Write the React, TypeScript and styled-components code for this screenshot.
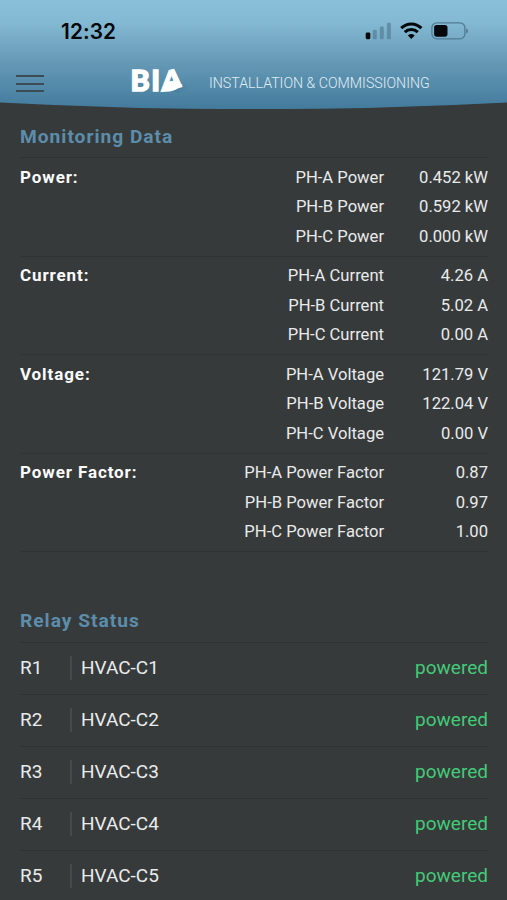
import React from "react";
import styled, { createGlobalStyle } from "styled-components";

const GlobalStyle = createGlobalStyle`
  * { box-sizing: border-box; }
  body {
    margin: 0;
    background: #373a3b;
    font-family: Roboto, "Liberation Sans", sans-serif;
  }
`;

const Screen = styled.div`
  width: 507px;
  height: 900px;
  overflow: hidden;
  background: #373a3b;
  color: #e9ebeb;
`;

const Header = styled.header`
  height: 109px;
  background: linear-gradient(#8bc0da 0, #84b9d3 22px, #6599b6 62px, #437b9d 109px);
  clip-path: path("M0 0H507V102.5Q253.5 116 0 102.5Z");
`;

const StatusBar = styled.div`
  height: 62px;
  padding: 0 38px 0 61px;
  display: flex;
  align-items: center;
  justify-content: space-between;
`;

const Clock = styled.span`
  padding-top: 1px;
  font: 600 20.8px/24px Inter, sans-serif;
  letter-spacing: 0.1px;
  color: #05080a;
`;

const NavBar = styled.div`
  height: 47px;
  padding-left: 16px;
  display: flex;
`;

const MenuButton = styled.button`
  width: 28px;
  height: 17px;
  margin-top: 13px;
  padding: 0;
  border: 0;
  background: none;
  display: flex;
  flex-direction: column;
  justify-content: space-between;
`;

const MenuLine = styled.span`
  height: 2px;
  width: 28px;
  background: #3b4c56;
`;

const LogoMark = styled.svg`
  margin-left: 84px;
  overflow: visible;
`;

const AppTitle = styled.h1`
  margin: 12px 0 0 13px;
  font-size: 14.2px;
  font-weight: 300;
  line-height: 18px;
  white-space: nowrap;
  color: #e0edf4;
`;

const Section = styled.section<{ $offset: number }>`
  padding: ${(p) => p.$offset}px 19px 0 20px;
`;

const SectionTitle = styled.h2<{ $space: number }>`
  margin: 0;
  padding-bottom: ${(p) => p.$space}px;
  border-bottom: 1px solid #2f3233;
  font-size: 19.2px;
  font-weight: 700;
  line-height: 24px;
  letter-spacing: 0.98px;
  color: #5c8dab;
`;

const Group = styled.div`
  height: 98.5px;
  padding-top: 4.5px;
  display: flex;
  border-bottom: 1px solid #313435;
`;

const GroupName = styled.h3`
  margin: 0;
  flex: 1;
  font-size: 17px;
  font-weight: 700;
  line-height: 29.6px;
  letter-spacing: 0.9px;
  color: #fbfbfb;
`;

const Readings = styled.dl`
  margin: 0;
  display: grid;
  grid-template-columns: auto 104px;
  grid-auto-rows: 29.6px;
  text-align: right;
  font-size: 16.6px;
  line-height: 29.6px;
  white-space: nowrap;
`;

const ReadingName = styled.dt``;

const ReadingValue = styled.dd`
  margin: 0;
`;

const RelayRow = styled.div`
  height: 52px;
  padding-bottom: 2px;
  display: flex;
  align-items: center;
  border-bottom: 1px solid #2f3233;
  font-size: 19px;
  line-height: 24px;
`;

const RelayId = styled.span`
  width: 52px;
  border-right: 2px solid #464a4b;
`;

const RelayName = styled.span`
  flex: 1;
  padding-left: 9px;
`;

const RelayState = styled.span`
  color: #42ca77;
`;

const groups = [
  { name: "Power", values: ["0.452 kW", "0.592 kW", "0.000 kW"] },
  { name: "Current", values: ["4.26 A", "5.02 A", "0.00 A"] },
  { name: "Voltage", values: ["121.79 V", "122.04 V", "0.00 V"] },
  { name: "Power Factor", values: ["0.87", "0.97", "1.00"] },
];

const phases = ["A", "B", "C"];
const relays = [1, 2, 3, 4, 5];

function StatusIcons() {
  return (
    <svg width="105" height="20" viewBox="1.3 0 105 20">
      <rect x="3" y="11.4" width="4.6" height="6.8" rx="1.4" fill="#05080a" />
      <g fill="#527c91" opacity="0.65">
        <rect x="10.1" y="8.8" width="4" height="9.4" rx="1.3" />
        <rect x="17.1" y="5.5" width="4" height="12.7" rx="1.3" />
        <rect x="24.2" y="1.8" width="4" height="16.4" rx="1.3" />
      </g>
      <g fill="none" stroke="#05080a" strokeWidth="3.1">
        <path d="M38.5 7.2C44.1 1.5 53.1 1.5 58.7 7.2" />
        <path d="M42.1 11.2C45.8 7.6 51.4 7.6 55.1 11.2" />
      </g>
      <path d="M45.2 14.5Q48.6 11.7 52 14.5L48.6 18.1Z" fill="#05080a" />
      <rect x="69.2" y="1.8" width="33" height="16" rx="5" fill="none" stroke="#527b91" strokeWidth="1.3" />
      <rect x="71.4" y="3.9" width="13.4" height="11.8" rx="2.6" fill="#05080a" />
      <path d="M103.4 7.6Q105.4 8.3 105.4 10T103.4 12.4Z" fill="#527b91" />
    </svg>
  );
}

function Logo() {
  return (
    <LogoMark width="68" height="38" viewBox="0 0 68 38">
      <defs>
        <linearGradient id="logoShade" x1="0" y1="0" x2="1" y2="0.4">
          <stop offset="0" stopColor="#356e92" stopOpacity="0.75" />
          <stop offset="1" stopColor="#356e92" stopOpacity="0" />
        </linearGradient>
      </defs>
      <path d="M53 21L62 26L54 31L39 29Z" fill="url(#logoShade)" />
      <g fill="#fff" stroke="#fff" strokeWidth="1.4" fontFamily="Lato, sans-serif" fontSize="29" fontWeight="900">
        <text x="2.6" y="28.6">B</text>
        <text x="23.2" y="28.6">I</text>
        <text transform="matrix(.97 -.22 0 .9 33.5 29.2)">A</text>
      </g>
      <path d="M36 24.7L49 21L54.8 22.7Q50 28 42 29.4L33.5 29.9Z" fill="#fff" />
    </LogoMark>
  );
}

export default function App() {
  return (
    <>
      <GlobalStyle />
      <Screen>
        <Header>
          <StatusBar>
            <Clock>12:32</Clock>
            <StatusIcons />
          </StatusBar>
          <NavBar>
            <MenuButton aria-label="Menu">
              <MenuLine />
              <MenuLine />
              <MenuLine />
            </MenuButton>
            <Logo />
            <AppTitle>INSTALLATION &amp; COMMISSIONING</AppTitle>
          </NavBar>
        </Header>
        <Section $offset={16}>
          <SectionTitle $space={8}>Monitoring Data</SectionTitle>
          {groups.map((group) => (
            <Group key={group.name}>
              <GroupName>{group.name}:</GroupName>
              <Readings>
                {group.values.map((value, i) => (
                  <React.Fragment key={phases[i]}>
                    <ReadingName>PH-{phases[i]} {group.name}</ReadingName>
                    <ReadingValue>{value}</ReadingValue>
                  </React.Fragment>
                ))}
              </Readings>
            </Group>
          ))}
        </Section>
        <Section $offset={57}>
          <SectionTitle $space={9}>Relay Status</SectionTitle>
          {relays.map((n) => (
            <RelayRow key={n}>
              <RelayId>R{n}</RelayId>
              <RelayName>HVAC-C{n}</RelayName>
              <RelayState>powered</RelayState>
            </RelayRow>
          ))}
        </Section>
      </Screen>
    </>
  );
}
